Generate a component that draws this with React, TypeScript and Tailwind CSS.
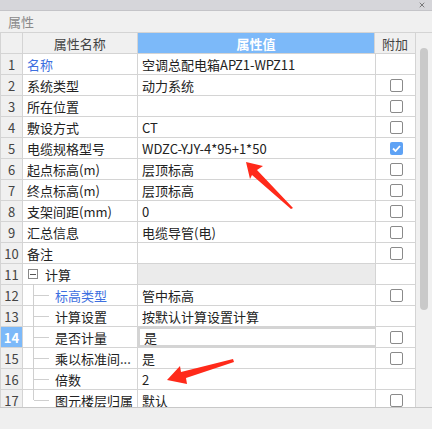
import { X } from 'lucide-react';

type Row = {
  name: string;
  value: string;
  check?: 'on' | 'off';
  blue?: boolean;
  child?: boolean;
  group?: boolean;
  last?: boolean;
};

const rows: Row[] = [
  { name: '名称', value: '空调总配电箱APZ1-WPZ11', blue: true },
  { name: '系统类型', value: '动力系统', check: 'off' },
  { name: '所在位置', value: '', check: 'off' },
  { name: '敷设方式', value: 'CT', check: 'off' },
  { name: '电缆规格型号', value: 'WDZC-YJY-4*95+1*50', check: 'on' },
  { name: '起点标高(m)', value: '层顶标高', check: 'off' },
  { name: '终点标高(m)', value: '层顶标高', check: 'off' },
  { name: '支架间距(mm)', value: '0', check: 'off' },
  { name: '汇总信息', value: '电缆导管(电)', check: 'off' },
  { name: '备注', value: '', check: 'off' },
  { name: '计算', value: '', group: true },
  { name: '标高类型', value: '管中标高', check: 'off', child: true, blue: true },
  { name: '计算设置', value: '按默认计算设置计算', child: true },
  { name: '是否计量', value: '是', check: 'off', child: true },
  { name: '乘以标准间...', value: '是', check: 'off', child: true },
  { name: '倍数', value: '2', child: true },
  { name: '图元楼层归属', value: '默认', check: 'off', child: true, last: true },
];

function Checkbox({ on }: { on: boolean }) {
  if (on) {
    return (
      <div className="w-[13px] h-[13px] rounded-[2px] bg-[#5ea2f5] flex items-center justify-center">
        <svg width="9" height="7" viewBox="0 0 9 7">
          <path d="M1 3.5 L3.5 6 L8 1" stroke="white" strokeWidth="1.8" fill="none" />
        </svg>
      </div>
    );
  }
  return <div className="w-[13px] h-[13px] rounded-[2px] border border-[#8a8a8a] bg-white" />;
}

export default function App() {
  return (
    <div
      className="relative w-[432px] h-[429px] bg-[#efefef] flex flex-col overflow-hidden text-[13px] text-[#222]"
      style={{ fontFamily: '"Noto Sans CJK SC", "Noto Sans", sans-serif' }}
    >
      <div className="h-[11px] bg-[#d6d6da] border-b border-[#c4c4c8] flex justify-end items-center pr-[6px]">
        <X size={8} strokeWidth={2.5} className="text-[#666]" />
      </div>
      <div className="h-[22px] bg-[#f0f0f0] border-b border-[#d4d4d4] flex items-center pl-[8px] text-[#8a8a8a] leading-none">
        属性
      </div>

      <div className="flex h-[375px] border-b border-[#c8c8c8]">
        <div className="w-[415px] overflow-hidden bg-white border-l border-[#d4d4d4]">
          {/* header */}
          <div className="flex h-[21px] border-b border-[#d4d4d4] leading-none">
            <div className="w-[22px] bg-[#f0f0f0] border-r border-[#d4d4d4]" />
            <div className="w-[115px] bg-[#f0f0f0] border-r border-[#d4d4d4] flex items-center justify-center text-[#444]">
              属性名称
            </div>
            <div className="w-[238px] bg-[#7cb9f9] border-r border-[#d4d4d4] flex items-center justify-center text-white font-bold">
              属性值
            </div>
            <div className="w-[40px] bg-[#f0f0f0] flex items-center justify-center text-[#444]">附加</div>
          </div>

          {rows.map((r, i) => {
            const selected = i === 13;
            return (
              <div key={i} className="flex h-[21px] border-b border-[#d4d4d4] leading-none">
                <div
                  className={`w-[22px] shrink-0 border-r border-[#d4d4d4] flex items-center justify-center ${
                    selected ? 'bg-[#7cb9f9] text-white font-bold' : 'bg-[#f0f0f0] text-[#444]'
                  }`}
                >
                  {i + 1}
                </div>
                <div className="relative w-[115px] shrink-0 border-r border-[#d4d4d4] flex items-center whitespace-nowrap">
                  {r.child && (
                    <>
                      <div
                        className={`absolute left-[10px] top-[-1px] border-l border-[#cfcfcf] ${
                          r.last ? 'h-[11px]' : 'h-[22px]'
                        }`}
                      />
                      <div className="absolute left-[11px] top-[10px] w-[15px] border-t border-[#cfcfcf]" />
                    </>
                  )}
                  {r.group ? (
                    <div className="flex items-center pl-[5px]">
                      <div className="w-[10px] h-[10px] border border-[#888] flex items-center justify-center">
                        <div className="w-[6px] border-t border-[#555]" />
                      </div>
                      <span className="ml-[7px]">{r.name}</span>
                    </div>
                  ) : (
                    <span className={`${r.child ? 'pl-[32px]' : 'pl-[4px]'} ${r.blue ? 'text-[#3d6fe0]' : ''}`}>
                      {r.name}
                    </span>
                  )}
                </div>
                <div
                  className={`w-[238px] shrink-0 flex items-center pl-[4px] ${
                    r.group ? 'bg-[#ebebeb] border-r border-[#d4d4d4]' : 'border-r border-[#d4d4d4]'
                  } ${selected ? 'border-2 border-[#7a7a7a] pl-[3px]' : ''}`}
                >
                  {r.value}
                </div>
                <div className="w-[40px] shrink-0 flex items-center justify-center">
                  {r.check && <Checkbox on={r.check === 'on'} />}
                </div>
              </div>
            );
          })}
        </div>
        <div className="w-[17px] bg-[#f0f0f0] border-l border-[#d4d4d4] pt-[15px] flex justify-center">
          <div className="w-[8px] h-[262px] rounded-full bg-[#c9c9c9]" />
        </div>
      </div>

      {/* annotation arrows */}
      <svg className="absolute left-0 top-0 pointer-events-none" width="432" height="429">
        <polygon points="246,162 263,166 257,170 293,208 291,209 252,175 250,179" fill="#ff2a1a" />
        <polygon points="167,380 180,366 181,372 233,359 234,362 186,378 187,384" fill="#ff2a1a" />
      </svg>
    </div>
  );
}
